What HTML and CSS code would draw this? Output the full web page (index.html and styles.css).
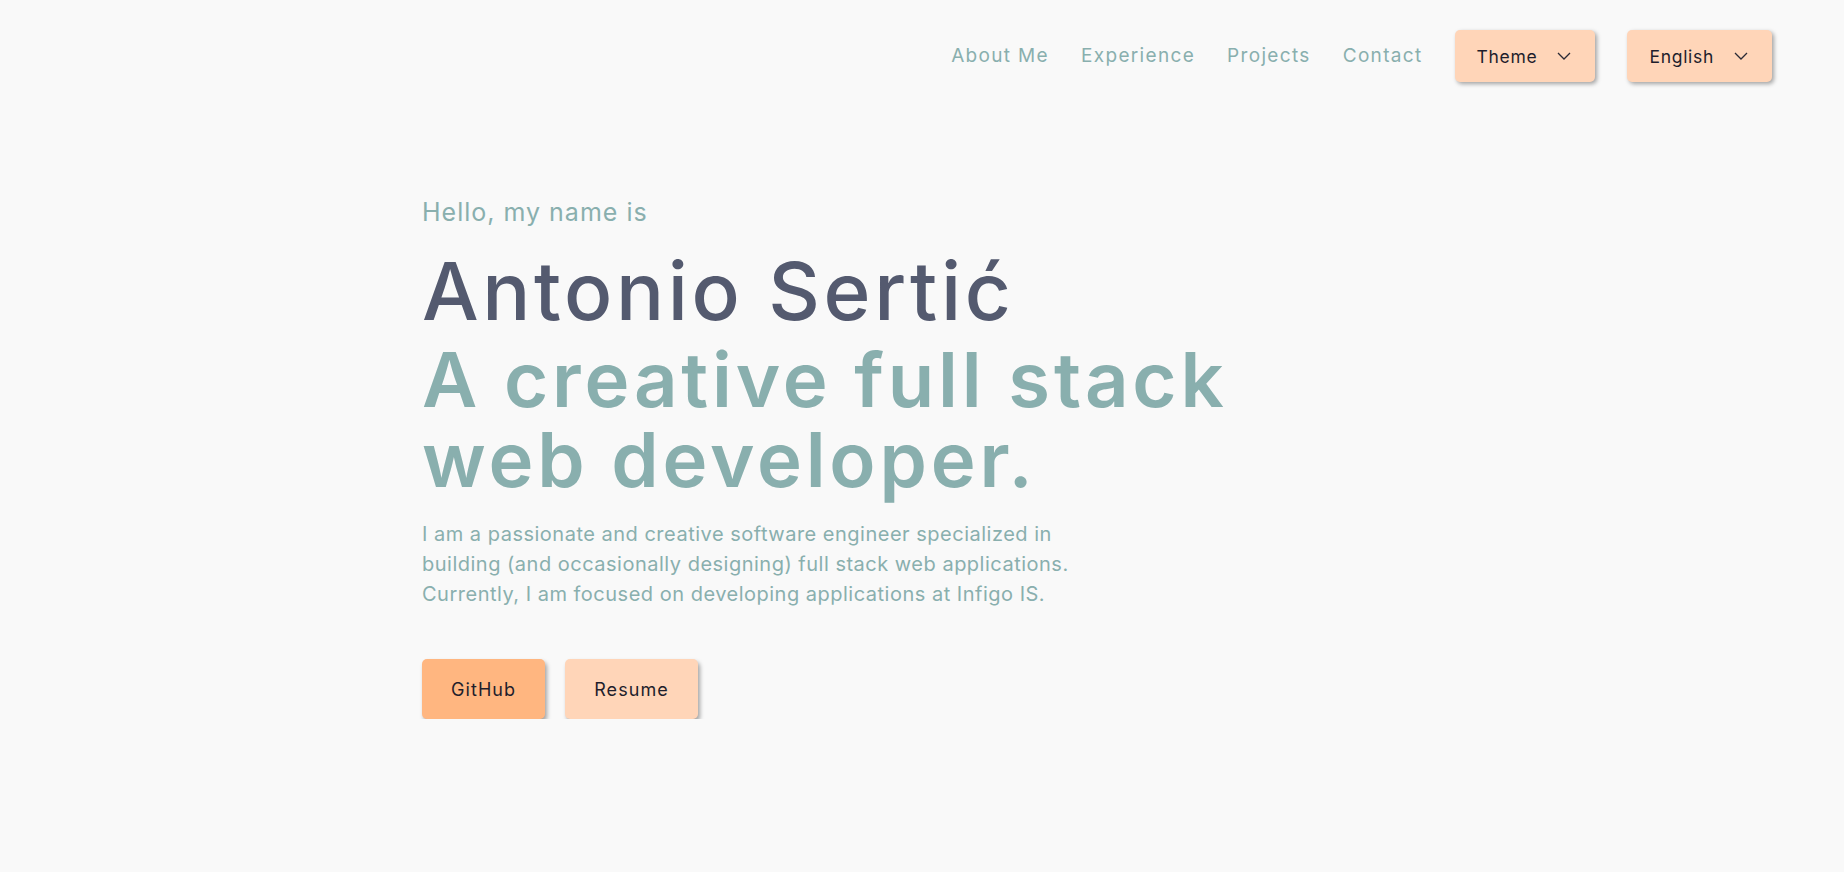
FILE: index.html
```html
<!DOCTYPE html>
<html lang="en">
<head>
<meta charset="utf-8">
<title>Antonio Sertić</title>
<link rel="stylesheet" href="styles.css">
</head>
<body>
<header class="topbar">
  <nav class="nav">
    <a class="nav-link" href="#about">About Me</a>
    <a class="nav-link" href="#experience">Experience</a>
    <a class="nav-link" href="#projects">Projects</a>
    <a class="nav-link" href="#contact">Contact</a>
  </nav>
  <button class="select select-theme">Theme
    <svg class="chev" width="14" height="8" viewBox="0 0 14 8"><polyline points="1,1 7,7 13,1" fill="none" stroke="#2a2a35" stroke-width="1.3"/></svg>
  </button>
  <button class="select select-lang">English
    <svg class="chev" width="14" height="8" viewBox="0 0 14 8"><polyline points="1,1 7,7 13,1" fill="none" stroke="#2a2a35" stroke-width="1.3"/></svg>
  </button>
</header>
<main class="hero">
  <p class="hello">Hello, my name is</p>
  <h1 class="name">Antonio Sertić</h1>
  <h2 class="tagline">A creative full stack<br>web developer.</h2>
  <p class="intro">I am a passionate and creative software engineer specialized in<br>building (and occasionally designing) full stack web applications.<br>Currently, I am focused on developing applications at Infigo IS.</p>
  <div class="actions">
    <a class="btn btn-primary" href="#github">GitHub</a>
    <a class="btn btn-secondary" href="#resume">Resume</a>
  </div>
</main>
</body>
</html>
```

FILE: styles.css
```css
* { box-sizing: border-box; }

body {
  margin: 0;
  background: #f9f9f9;
  font-family: Inter, "Open Sans", sans-serif;
  color: #89afae;
}

.topbar {
  display: flex;
  justify-content: flex-end;
  align-items: center;
  gap: 32px;
  padding: 30px 72px 0 0;
}

.nav {
  display: flex;
  align-items: center;
  gap: 32px;
}

.nav-link {
  color: #89afae;
  text-decoration: none;
  font-size: 19px;
  letter-spacing: 0.07em;
  line-height: 24px;
}

.select {
  display: flex;
  align-items: center;
  gap: 20px;
  height: 52px;
  padding: 0 24px 0 22px;
  border: none;
  border-radius: 5px;
  background: #ffd5b8;
  color: #1e1e2c;
  font-family: inherit;
  font-size: 17.5px;
  letter-spacing: 0.04em;
  box-shadow: 2px 2px 4px rgba(0, 0, 0, 0.35);
}

.chev { display: block; }

.hero {
  width: 1000px;
  margin: 0 auto;
  padding-top: 115px;
}

.hello {
  margin: 0;
  font-size: 25px;
  line-height: 30px;
  letter-spacing: 0.04em;
  color: #89afae;
}

.name {
  margin: 20px 0 0;
  font-size: 80px;
  line-height: 88px;
  font-weight: 500;
  letter-spacing: 0.045em;
  color: #545a6f;
}

.tagline {
  margin: 4px 0 0;
  font-size: 76px;
  line-height: 80px;
  font-weight: 600;
  letter-spacing: 0.05em;
  color: #89afae;
}

.intro {
  margin: 20px 0 0;
  font-size: 20px;
  line-height: 30px;
  letter-spacing: 0.025em;
  color: #89afae;
}

.actions {
  display: flex;
  gap: 20px;
  margin-top: 50px;
}

.btn {
  display: flex;
  align-items: center;
  justify-content: center;
  height: 60px;
  padding: 0 29px;
  border-radius: 5px;
  color: #1e1e2c;
  text-decoration: none;
  font-size: 18px;
  letter-spacing: 0.06em;
  box-shadow: 2px 3px 4px rgba(0, 0, 0, 0.35);
}

.btn-primary { background: #ffb680; }
.btn-secondary { background: #ffd5b8; }
```
